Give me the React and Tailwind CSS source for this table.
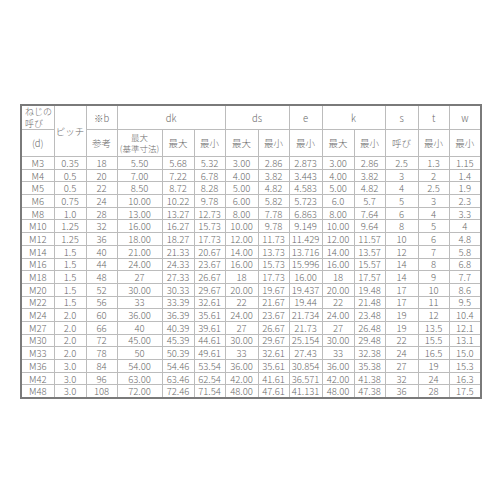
const rows = [
  ["M3", "0.35", "18", "5.50", "5.68", "5.32", "3.00", "2.86", "2.873", "3.00", "2.86", "2.5", "1.3", "1.15"],
  ["M4", "0.5", "20", "7.00", "7.22", "6.78", "4.00", "3.82", "3.443", "4.00", "3.82", "3", "2", "1.4"],
  ["M5", "0.5", "22", "8.50", "8.72", "8.28", "5.00", "4.82", "4.583", "5.00", "4.82", "4", "2.5", "1.9"],
  ["M6", "0.75", "24", "10.00", "10.22", "9.78", "6.00", "5.82", "5.723", "6.0", "5.7", "5", "3", "2.3"],
  ["M8", "1.0", "28", "13.00", "13.27", "12.73", "8.00", "7.78", "6.863", "8.00", "7.64", "6", "4", "3.3"],
  ["M10", "1.25", "32", "16.00", "16.27", "15.73", "10.00", "9.78", "9.149", "10.00", "9.64", "8", "5", "4"],
  ["M12", "1.25", "36", "18.00", "18.27", "17.73", "12.00", "11.73", "11.429", "12.00", "11.57", "10", "6", "4.8"],
  ["M14", "1.5", "40", "21.00", "21.33", "20.67", "14.00", "13.73", "13.716", "14.00", "13.57", "12", "7", "5.8"],
  ["M16", "1.5", "44", "24.00", "24.33", "23.67", "16.00", "15.73", "15.996", "16.00", "15.57", "14", "8", "6.8"],
  ["M18", "1.5", "48", "27", "27.33", "26.67", "18", "17.73", "16.00", "18", "17.57", "14", "9", "7.7"],
  ["M20", "1.5", "52", "30.00", "30.33", "29.67", "20.00", "19.67", "19.437", "20.00", "19.48", "17", "10", "8.6"],
  ["M22", "1.5", "56", "33", "33.39", "32.61", "22", "21.67", "19.44", "22", "21.48", "17", "11", "9.5"],
  ["M24", "2.0", "60", "36.00", "36.39", "35.61", "24.00", "23.67", "21.734", "24.00", "23.48", "19", "12", "10.4"],
  ["M27", "2.0", "66", "40", "40.39", "39.61", "27", "26.67", "21.73", "27", "26.48", "19", "13.5", "12.1"],
  ["M30", "2.0", "72", "45.00", "45.39", "44.61", "30.00", "29.67", "25.154", "30.00", "29.48", "22", "15.5", "13.1"],
  ["M33", "2.0", "78", "50", "50.39", "49.61", "33", "32.61", "27.43", "33", "32.38", "24", "16.5", "15.0"],
  ["M36", "3.0", "84", "54.00", "54.46", "53.54", "36.00", "35.61", "30.854", "36.00", "35.38", "27", "19", "15.3"],
  ["M42", "3.0", "96", "63.00", "63.46", "62.54", "42.00", "41.61", "36.571", "42.00", "41.38", "32", "24", "16.3"],
  ["M48", "3.0", "108", "72.00", "72.46", "71.54", "48.00", "47.61", "41.131", "48.00", "47.38", "36", "28", "17.5"],
];

const widths = [33, 32, 31, 45, 32, 31, 33, 31, 33, 32, 31, 33, 31, 32];

const cell = "border border-[#bcbcbc] text-center align-middle p-0 leading-[10px] whitespace-nowrap";
const head = `${cell} font-light`;

export default function App() {
  return (
    <div className="w-[500px] h-[500px] bg-white pt-[104px] pl-[20px] text-[#6b6b6b] font-['Noto_Sans_CJK_JP','Noto_Sans',sans-serif]">
      <table className="table-fixed border-collapse border-2 border-[#7a7a7a] w-[460px] text-[9.5px] font-light">
        <colgroup>
          {widths.map((w, i) => (
            <col key={i} style={{ width: w }} />
          ))}
        </colgroup>
        <thead className="text-[9.5px]">
          <tr className="h-[24px]">
            <th className={`${head} text-left pl-[3px] text-[9px]`}>
              <div className="leading-[11.5px]">ねじの</div>
              <div className="leading-[11.5px]">呼び</div>
            </th>
            <th rowSpan={2} className={head}>ピッチ</th>
            <th className={head}>※b</th>
            <th colSpan={3} className={head}>dk</th>
            <th colSpan={2} className={head}>ds</th>
            <th className={head}>e</th>
            <th colSpan={2} className={head}>k</th>
            <th className={head}>s</th>
            <th className={head}>t</th>
            <th className={head}>w</th>
          </tr>
          <tr className="h-[27px]">
            <th className={head}>(d)</th>
            <th className={head}>参考</th>
            <th className={`${head} text-[8.5px]`}>
              <div className="leading-[11px]">最大</div>
              <div className="leading-[11px]">(基準寸法)</div>
            </th>
            <th className={head}>最大</th>
            <th className={head}>最小</th>
            <th className={head}>最大</th>
            <th className={head}>最小</th>
            <th className={head}>最小</th>
            <th className={head}>最大</th>
            <th className={head}>最小</th>
            <th className={head}>呼び</th>
            <th className={head}>最小</th>
            <th className={head}>最小</th>
          </tr>
        </thead>
        <tbody>
          {rows.map((r, i) => (
            <tr key={`row-${i}`} className="h-[12.7px]">
              {r.map((v, j) => (
                <td key={j} className={cell}>{v}</td>
              ))}
            </tr>
          ))}
        </tbody>
      </table>
    </div>
  );
}
